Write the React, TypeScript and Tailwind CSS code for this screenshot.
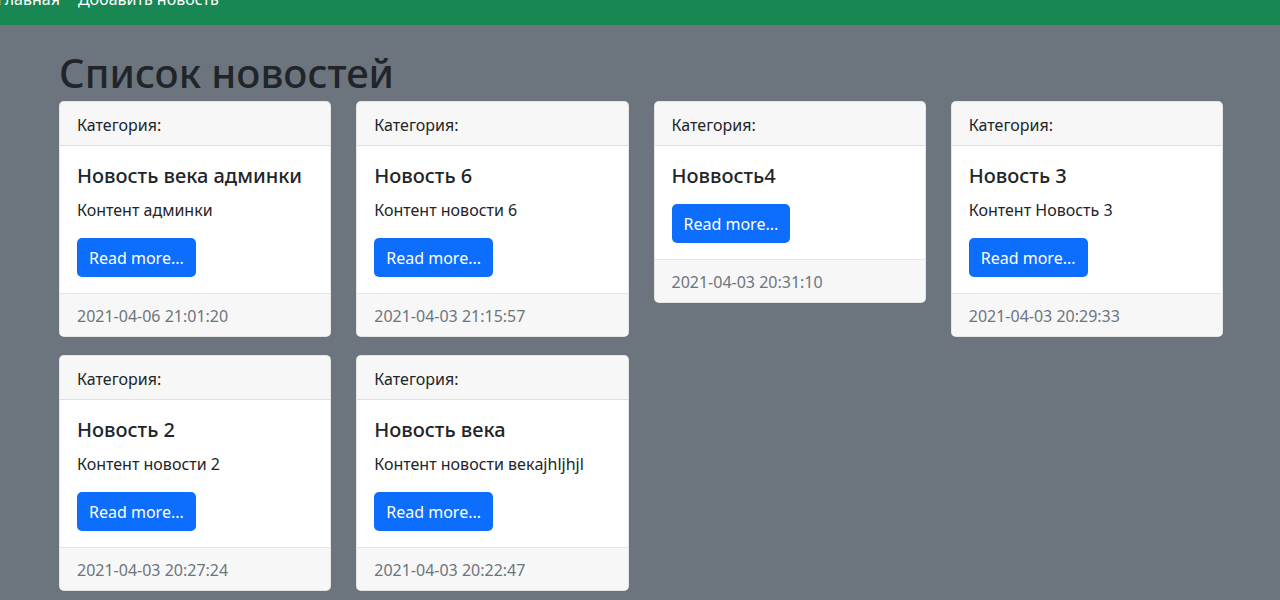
import React from 'react';

interface NewsItem {
  id: number;
  title: string;
  content?: string;
  date: string;
}

const news: NewsItem[] = [
  { id: 1, title: 'Новость века админки', content: 'Контент админки', date: '2021-04-06 21:01:20' },
  { id: 2, title: 'Новость 6', content: 'Контент новости 6', date: '2021-04-03 21:15:57' },
  { id: 3, title: 'Новвость4', date: '2021-04-03 20:31:10' },
  { id: 4, title: 'Новость 3', content: 'Контент Новость 3', date: '2021-04-03 20:29:33' },
  { id: 5, title: 'Новость 2', content: 'Контент новости 2', date: '2021-04-03 20:27:24' },
  { id: 6, title: 'Новость века', content: 'Контент новости векajhljhjl', date: '2021-04-03 20:22:47' },
];

const NewsCard: React.FC<{ item: NewsItem }> = ({ item }) => (
  <div className="bg-white rounded-[5px] border border-black/10 overflow-hidden self-start">
    <div className="h-[44px] flex items-center pt-[2px] px-[17px] bg-[#f7f7f7] border-b border-[#dfdfdf] text-[16px] text-[#212529]">
      Категория:
    </div>
    <div className="px-[17px] pt-[17px] pb-[16px]">
      <h5 className="text-[20px] leading-[26px] font-medium text-[#212529] mb-[15px]">{item.title}</h5>
      {item.content && (
        <p className="text-[16px] leading-[20px] text-[#212529] -mt-[4px] mb-[18px]">{item.content}</p>
      )}
      <button className="h-[39px] px-[12px] rounded-[5px] bg-[#0d6efd] text-white text-[16px]">
        Read more...
      </button>
    </div>
    <div className="h-[43px] flex items-center pt-[2px] px-[17px] bg-[#f7f7f7] border-t border-[#e6e6e6] text-[16px] text-[#6c757d]">
      {item.date}
    </div>
  </div>
);

export default function App() {
  return (
    <div className="min-h-[600px] bg-[#6c757d] font-['Noto_Sans',sans-serif]">
      <nav className="h-[25px] bg-[#198754] overflow-hidden">
        <div className="-mt-[13px] -ml-[3px] flex gap-[18px] text-white text-[16px] leading-[24px]">
          <a>Главная</a>
          <a>Добавить новость</a>
        </div>
      </nav>
      <div className="pl-[59px] w-[1223px]">
        <h1 className="text-[40px] leading-[48px] font-medium text-[#212529] mt-[24px] mb-[4px]">
          Список новостей
        </h1>
        <div className="grid grid-cols-4 gap-x-[25px] gap-y-[18px]">
          {news.map((n) => (
            <NewsCard key={n.id} item={n} />
          ))}
        </div>
      </div>
    </div>
  );
}
